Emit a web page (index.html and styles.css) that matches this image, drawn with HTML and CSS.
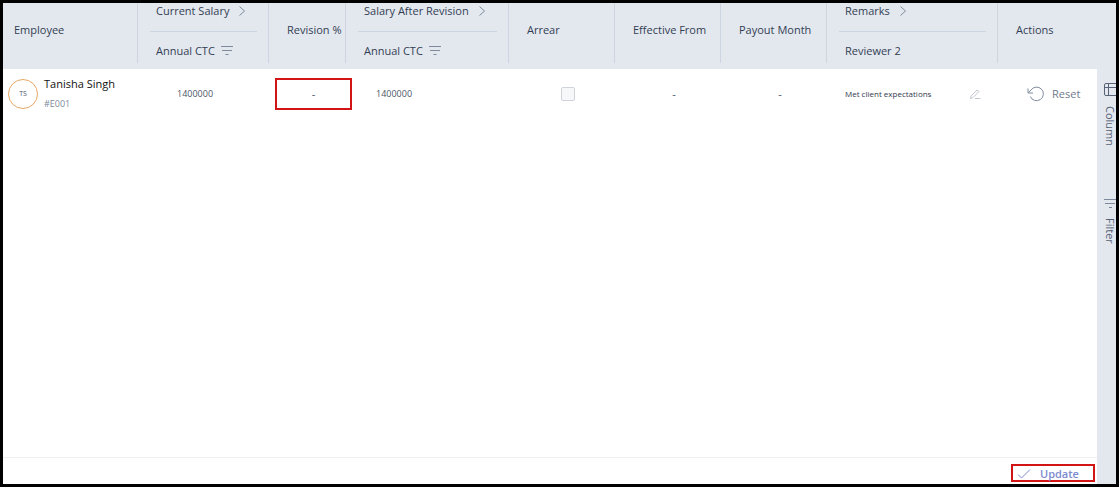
FILE: index.html
```html
<!DOCTYPE html>
<html lang="en">
<head>
    <meta charset="UTF-8">
    <meta name="viewport" content="width=device-width, initial-scale=1.0">
    <title>Salary Revision</title>
<link rel="stylesheet" href="styles.css">
</head>
<body>
<div class="page">
<main class="content">
<table class="grid">
    <colgroup>
        <col class="col-employee">
        <col class="col-current">
        <col class="col-revision">
        <col class="col-after">
        <col class="col-small">
        <col class="col-small">
        <col class="col-small">
        <col class="col-remarks">
        <col class="col-actions">
    </colgroup>
    <thead>
    <tr>
        <th rowspan="2" class="tall first">Employee</th>
        <th class="group"><div class="group-title">Current Salary
            <svg class="chevron" viewBox="0 0 8 12"><path d="M1.5 1.5 6.5 6l-5 4.5"/></svg></div></th>
        <th rowspan="2" class="tall">Revision %</th>
        <th class="group"><div class="group-title">Salary After Revision
            <svg class="chevron" viewBox="0 0 8 12"><path d="M1.5 1.5 6.5 6l-5 4.5"/></svg></div></th>
        <th rowspan="2" class="tall">Arrear</th>
        <th rowspan="2" class="tall">Effective From</th>
        <th rowspan="2" class="tall">Payout Month</th>
        <th class="group"><div class="group-title">Remarks
            <svg class="chevron" viewBox="0 0 8 12"><path d="M1.5 1.5 6.5 6l-5 4.5"/></svg></div></th>
        <th rowspan="2" class="tall last">Actions</th>
    </tr>
    <tr>
        <th class="sub"><div class="sub-title">Annual CTC
            <svg class="lines" viewBox="0 0 12 9"><path d="M0 .5h12M1 4.5h10M4.5 8.5h3"/></svg></div></th>
        <th class="sub"><div class="sub-title">Annual CTC
            <svg class="lines" viewBox="0 0 12 9"><path d="M0 .5h12M1 4.5h10M4.5 8.5h3"/></svg></div></th>
        <th class="sub"><div class="sub-title">Reviewer 2</div></th>
    </tr>
    </thead>
    <tbody>
    <tr>
        <td class="employee">
            <div class="person">
                <span class="avatar">TS</span>
                <div>
                    <div class="name">Tanisha Singh</div>
                    <div class="code">#E001</div>
                </div>
            </div>
        </td>
        <td class="amount current">1400000</td>
        <td class="center marked">-<span class="mark"></span></td>
        <td class="amount after">1400000</td>
        <td class="center"><input type="checkbox" class="check" aria-label="Arrear"></td>
        <td class="center">-</td>
        <td class="center">-</td>
        <td>
            <div class="remark">
                <span>Met client expectations</span>
                <button type="button" class="edit" aria-label="Edit remark">
                    <svg viewBox="0 0 12 11"><path d="M1.5 9.5l.5-2.5L8 1l2 1.5-6 6zM6 9.5h5.5"/></svg>
                </button>
            </div>
        </td>
        <td class="actions">
            <button type="button" class="reset">
                <svg viewBox="0 0 18 16"><path d="M1 2.5v4.500h5M1.500 6.500 4 4a6.800 6.800 0 1 1-.7 6.500"/></svg>
                Reset
            </button>
        </td>
    </tr>
    </tbody>
</table>
<footer class="footer">
    <button type="button" class="update">
        <svg viewBox="0 0 14 12"><path d="M1 6.500 4.500 10 13 1.500"/></svg>
        Update
    </button>
</footer>
</main>
<aside class="side">
    <button type="button" class="side-button">
        <svg class="panel-icon" viewBox="0 0 12 14"><path d="M12 .5H2Q.5.5.5 2v9q0 1.500 1.500 1.500h10M.5 4.500H12M4.500 .5v12"/></svg>
        <span>Column</span>
    </button>
    <button type="button" class="side-button filter">
        <svg class="filter-icon" viewBox="0 0 12 10"><path d="M0 .5h12M1 4.500h10M5 8.500h3"/></svg>
        <span>Filter</span>
    </button>
</aside>
</div>
</body>
</html>
```
FILE: styles.css
```css
*{box-sizing: border-box;}
body{
    margin: 0;
    font-family: "Open Sans", "Noto Sans", sans-serif;
    font-size: 11px;
    line-height: 16px;
    color: #4b5668;
    background-color: #fff;
}
.page{
    display: flex;
    min-height: 100vh;
    border: 3px solid #000;
}
.content{
    flex: 1;
    min-width: 0;
    display: flex;
    flex-direction: column;
}
button{
    display: flex;
    align-items: center;
    padding: 0;
    border: 0;
    background: none;
    font: inherit;
    color: inherit;
    cursor: pointer;
}
svg{
    display: block;
    flex: none;
    fill: none;
    stroke: #7f8b9c;
    stroke-width: 1;
}

/* table */
.grid{
    width: 100%;
    table-layout: fixed;
    border-collapse: collapse;
}
.col-employee{width: 135px;}
.col-current{width: 131px;}
.col-revision{width: 77px;}
.col-after{width: 163px;}
.col-small{width: 106px;}
.col-remarks{width: 171px;}
.col-actions{width: 99px;}

/* column separators stop short of the header's bottom edge */
th{
    padding: 0;
    text-align: left;
    font-weight: 500;
    color: #333e52;
    white-space: nowrap;
    background: linear-gradient(#cdd5e0, #cdd5e0) right top / 1px 100% no-repeat #e3e8ef;
}
.tall{
    padding: 0 0 12px 18px;
    background-size: 1px 60px;
}
.first{padding-left: 11px;}
.last{background-image: none;}
.group{
    height: 29px;
    padding: 0 12px;
    vertical-align: top;
}
.group-title{
    display: flex;
    align-items: center;
    gap: 9px;
    height: 29px;
    padding: 0 0 13px 6px;
    border-bottom: 1px solid #cdd5e0;
}
.sub{
    height: 37px;
    padding-left: 18px;
    background-size: 1px 31px;
}
.sub-title{
    display: flex;
    align-items: center;
    gap: 6px;
}
.chevron{
    width: 8px;
    height: 12px;
}
.lines{
    width: 12px;
    height: 9px;
}
td{
    height: 50px;
    padding: 0;
}
.employee{padding-left: 5px;}
.person{
    display: flex;
    align-items: center;
    gap: 6px;
}
.avatar{
    width: 30px;
    height: 30px;
    border: 1px solid #e9a866;
    border-radius: 50%;
    font-size: 7px;
    line-height: 28px;
    text-align: center;
}
.name{
    line-height: 20px;
    color: #111;
}
.code{
    font-size: 9px;
    line-height: 20px;
    color: #7b899c;
}
.amount{font-size: 9px;}
.current{padding-left: 39px;}
.after{padding-left: 30px;}
.center{
    padding-left: 12px;
    text-align: center;
}
.marked{position: relative;}
.mark{
    position: absolute;
    top: 9px;
    left: 6px;
    width: 100%;
    height: 32px;
    border: 2px solid #d31414;
}
.check{
    appearance: none;
    display: block;
    width: 14px;
    height: 14px;
    margin: 0 auto;
    border: 1px solid #cfd4da;
    border-radius: 2px;
    background-color: #f6f7f8;
}
.remark{
    display: flex;
    align-items: center;
    justify-content: space-between;
    padding: 0 17px 0 18px;
    font-size: 8px;
    color: #2f3a4c;
    white-space: nowrap;
}
.edit svg{
    width: 12px;
    height: 11px;
    stroke: #c3c8d0;
}
.actions{padding-left: 29px;}
.reset{
    gap: 7px;
    font-weight: 500;
    color: #6f7b8d;
}
.reset svg{
    width: 18px;
    height: 16px;
}

/* bottom bar */
.footer{
    display: flex;
    justify-content: flex-end;
    margin-top: auto;
    height: 27px;
    padding: 6px 2px 0 0;
    border-top: 1px solid #efefef;
}
.update{
    gap: 9px;
    width: 84px;
    height: 18px;
    padding: 2px 0 0 4px;
    border: 2px solid #d31414;
    font-weight: 600;
    color: #7c8bd0;
}
.update svg{
    width: 14px;
    height: 12px;
    stroke: #7c8bd0;
}

/* tool panel */
.side{
    width: 19px;
    padding: 80px 0 0 7px;
    background-color: #e3e8ef;
}
.side-button{
    flex-direction: column;
    align-items: flex-start;
    gap: 9px;
    width: 12px;
    line-height: 12px;
    color: #566275;
}
.side-button span{
    writing-mode: vertical-rl;
    font-weight: 500;
}
.filter{margin-top: 53px;}
.panel-icon{
    width: 12px;
    height: 14px;
    stroke: #566275;
}
.filter-icon{
    width: 12px;
    height: 10px;
}
```
